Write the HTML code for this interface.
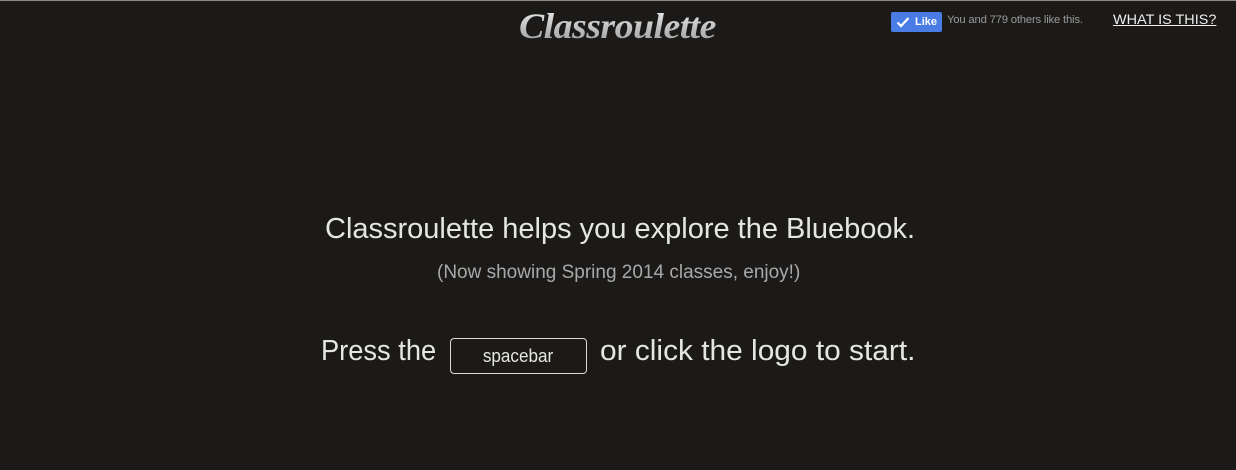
<!DOCTYPE html>
<html><head><meta charset="utf-8"><style>
html,body{margin:0;padding:0;}
body{width:1236px;height:470px;background:#1c1a18;border-top:1px solid #8a8a8a;box-sizing:border-box;position:relative;overflow:hidden;font-family:"Liberation Sans",sans-serif;color:#e6e6e0;}
.logo{position:absolute;left:519px;top:4px;height:40px;font-family:"Liberation Serif",serif;font-style:italic;font-weight:bold;font-size:36px;color:#cfcfcf;background:linear-gradient(#f2f2f2,#9a9a9a);-webkit-background-clip:text;background-clip:text;-webkit-text-fill-color:transparent;white-space:nowrap;letter-spacing:-0.5px;transform:scaleX(1.05);transform-origin:left;}
.like{position:absolute;left:891px;top:11px;width:51px;height:20px;background:#4a7ce6;border-radius:2px;color:#fff;font-size:11px;font-weight:bold;line-height:20px;}
.like svg{position:absolute;left:5px;top:4px}
.like span{position:absolute;left:24px}
.likes{position:absolute;left:947px;top:13px;font-size:11.3px;color:#9a9a9a;white-space:nowrap;letter-spacing:-0.2px}
.what{position:absolute;left:1113px;top:10px;font-size:14px;color:#eee;text-decoration:underline;white-space:nowrap;transform:scaleX(1.03);transform-origin:left;}
.t{position:absolute;white-space:nowrap;transform-origin:left}
.sp{position:absolute;left:450px;top:337px;width:137px;height:36px;border:1px solid #d8d8d8;border-radius:4px;box-sizing:border-box;text-align:center;font-size:18px;line-height:34px;}
</style></head><body>
<div class="logo">Classroulette</div>
<div class="like"><svg width="14" height="12" viewBox="0 0 14 12"><path d="M1.5 6.5 L5 10 L12.5 2" stroke="#fff" stroke-width="2.2" fill="none"/></svg><span>Like</span></div>
<div class="likes">You and 779 others like this.</div>
<div class="what">WHAT IS THIS?</div>
<div class="t" style="left:325px;top:212px;font-size:29px;transform:scaleX(1.0)">Classroulette helps you explore the Bluebook.</div>
<div class="t" style="left:437px;top:261px;font-size:19px;color:#a8a8a8;transform:scaleX(1.0)">(Now showing Spring 2014 classes, enjoy!)</div>
<div class="t" style="left:321px;top:334px;font-size:29px;transform:scaleX(0.94)">Press the</div>
<div class="sp"><span style="display:inline-block;transform:scaleX(0.95)">spacebar</span></div>
<div class="t" style="left:600px;top:334px;font-size:29px;transform:scaleX(1.03)">or click the logo to start.</div>
</body></html>
